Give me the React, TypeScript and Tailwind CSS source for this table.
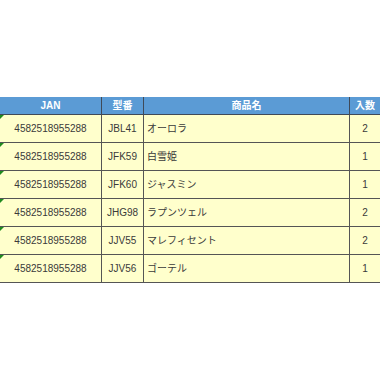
const rows = [
  { jan: '4582518955288', code: 'JBL41', name: 'オーロラ', qty: 2 },
  { jan: '4582518955288', code: 'JFK59', name: '白雪姫', qty: 1 },
  { jan: '4582518955288', code: 'JFK60', name: 'ジャスミン', qty: 1 },
  { jan: '4582518955288', code: 'JHG98', name: 'ラプンツェル', qty: 2 },
  { jan: '4582518955288', code: 'JJV55', name: 'マレフィセント', qty: 2 },
  { jan: '4582518955288', code: 'JJV56', name: 'ゴーテル', qty: 1 }
]

const font = { fontFamily: '"Liberation Sans", "Noto Sans CJK JP", sans-serif' }

export default function App() {
  return (
    <div className="flex h-screen w-full items-center bg-white" style={font}>
      <div className="grid w-[380px] grid-cols-[102px_42px_206px_30px]">
        <div className="flex h-[18px] items-center justify-center border-r border-b border-[#3f4a58] bg-[#5b9bd5] text-[10px] font-bold text-white">JAN</div>
        <div className="flex h-[18px] items-center justify-center border-r border-b border-[#3f4a58] bg-[#5b9bd5] text-[10px] font-bold text-white">型番</div>
        <div className="flex h-[18px] items-center justify-center border-r border-b border-[#3f4a58] bg-[#5b9bd5] text-[10px] font-bold text-white">商品名</div>
        <div className="flex h-[18px] items-center justify-center border-b border-[#3f4a58] bg-[#5b9bd5] text-[10px] font-bold text-white">入数</div>
        {rows.map((row, i) => (
          <div key={i} className="contents text-[10px] text-[#3a3a3a]">
            <div className="relative flex h-[28px] items-center justify-center border-r border-b border-[#555555] bg-[#ffffcc]">
              <span className="absolute top-0 left-0 h-0 w-0 border-t-[4px] border-r-[4px] border-t-[#1f8a1f] border-r-transparent" />
              {row.jan}
            </div>
            <div className="flex h-[28px] items-center justify-center border-r border-b border-[#555555] bg-[#ffffcc]">{row.code}</div>
            <div className="flex h-[28px] items-center border-r border-b border-[#555555] bg-[#ffffcc] pl-[3px]">{row.name}</div>
            <div className="flex h-[28px] items-center justify-center border-b border-[#555555] bg-[#ffffcc]">{row.qty}</div>
          </div>
        ))}
      </div>
    </div>
  )
}
